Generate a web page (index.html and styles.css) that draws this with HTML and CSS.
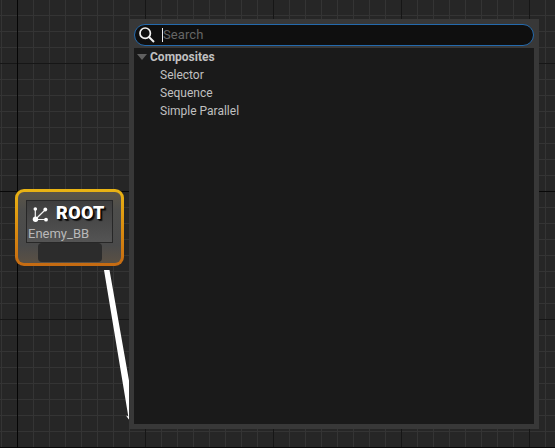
FILE: index.html
```html
<!DOCTYPE html>
<html lang="en">
<head>
<meta charset="utf-8">
<title>Behavior Tree</title>
<link rel="stylesheet" href="styles.css">
</head>
<body>
<main class="graph">
  <svg class="wire" width="555" height="448" viewBox="0 0 555 448">
    <path d="M104 270H109.500L131 392V422L128.500 419L126 415.500L128.300 416.500Z" fill="#fff"/>
  </svg>
  <section class="node">
    <div class="node-body">
      <div class="node-card">
        <div class="node-title">
          <svg class="node-icon" width="17" height="17" viewBox="0 0 17 17">
            <path d="M3.300 3.500V13.500H13.500M3.300 13.500L13 4" fill="none" stroke="#f4f4f4" stroke-width="1.200"/>
            <g fill="#fff"><circle cx="3.300" cy="3" r="1.800"/><circle cx="13.300" cy="3.500" r="1.900"/><circle cx="14" cy="13.700" r="1.900"/><circle cx="3.500" cy="13.200" r="2.700"/></g>
          </svg>
          <span>ROOT</span>
        </div>
        <div class="node-asset">Enemy_BB</div>
      </div>
      <div class="node-pin"></div>
    </div>
  </section>
  <section class="menu">
    <div class="search">
      <svg class="search-icon" width="18" height="18" viewBox="0 0 18 18">
        <circle cx="7.200" cy="7.200" r="5.200" fill="none" stroke="#f2f2f2" stroke-width="1.700"/>
        <path d="M11 11L16 16" stroke="#f2f2f2" stroke-width="2"/>
      </svg>
      <span class="caret"></span>
      <span class="hint">Search</span>
    </div>
    <div class="list">
      <div class="category"><span class="arrow"></span><span>Composites</span></div>
      <div class="item">Selector</div>
      <div class="item">Sequence</div>
      <div class="item">Simple Parallel</div>
    </div>
  </section>
</main>
</body>
</html>
```
FILE: styles.css
```css
* { box-sizing: border-box; }
body { margin: 0; font-family: Roboto, sans-serif; }
.graph {
  position: relative;
  width: 555px;
  height: 448px;
  overflow: hidden;
  background-color: #262626;
  background-image:
    linear-gradient(90deg, #050505 1px, transparent 1px),
    linear-gradient(#080808 1px, transparent 1px),
    linear-gradient(90deg, #161616 1px, transparent 1px),
    linear-gradient(#161616 1px, transparent 1px),
    linear-gradient(90deg, #343434 1px, transparent 1px),
    linear-gradient(#343434 1px, transparent 1px);
  background-size: 1024px 100%, 100% 256px, 128px 100%, 100% 128px, 16px 100%, 100% 16px;
  background-position: 17px 0, 0 191px, 17px 0, 0 63px, 1px 0, 0 15px;
}
.wire { position: absolute; left: 0; top: 0; }
.node {
  position: absolute;
  left: 15px;
  top: 189px;
  width: 109px;
  height: 77px;
  padding: 3px;
  border-radius: 9px;
  background: linear-gradient(#e9b414, #d98a10 55%, #c56a12);
}
.node-body {
  height: 71px;
  padding: 8px 8px 0;
  border-radius: 6px;
  background: linear-gradient(#5b5548, #4d4d4b 25%, #4a4a4a 75%, #5a5044);
}
.node-card {
  width: 87px;
  height: 43px;
  border: 1px solid #272727;
  background: linear-gradient(#3e3e3e, #545454);
}
.node-title {
  display: flex;
  align-items: center;
  height: 24px;
  padding-left: 5px;
  color: #fff;
  font-size: 18px;
  font-weight: 900;
  line-height: 24px;
  letter-spacing: 0.4px;
  text-shadow: 1px 1px 1px #000, 2px 2px 1px #111;
}
.node-icon { position: relative; top: 1px; margin-right: 7px; flex: none; }
.node-asset {
  margin-left: 1px;
  color: #b9b9b9;
  font-size: 13px;
  line-height: 18px;
  white-space: nowrap;
}
.node-pin {
  width: 64px;
  height: 19px;
  margin-left: 12px;
  border-radius: 4px;
  background: #2c2c2c;
}
.menu {
  position: absolute;
  left: 129px;
  top: 19px;
  width: 410px;
  height: 410px;
  padding: 5px;
  background: #383838;
}
.search {
  display: flex;
  align-items: center;
  height: 22px;
  margin-bottom: 2px;
  padding-left: 3px;
  border: 1px solid #246aad;
  border-radius: 11px;
  background: #0f0f0f;
}
.caret { width: 1px; height: 14px; margin-left: 6px; background: #eee; }
.hint { color: #656565; font-size: 13px; line-height: 16px; letter-spacing: 0.1px; }
.list { height: 376px; background: #1a1a1a; color: #c0c0c0; font-size: 12px; }
.category {
  display: flex;
  align-items: center;
  height: 18px;
  padding-left: 3px;
  font-weight: 700;
}
.arrow {
  width: 10px;
  height: 6px;
  margin-right: 3px;
  background: #606060;
  clip-path: polygon(0 0, 100% 0, 50% 100%);
}
.item { height: 18px; padding-left: 26px; line-height: 18px; }
```
